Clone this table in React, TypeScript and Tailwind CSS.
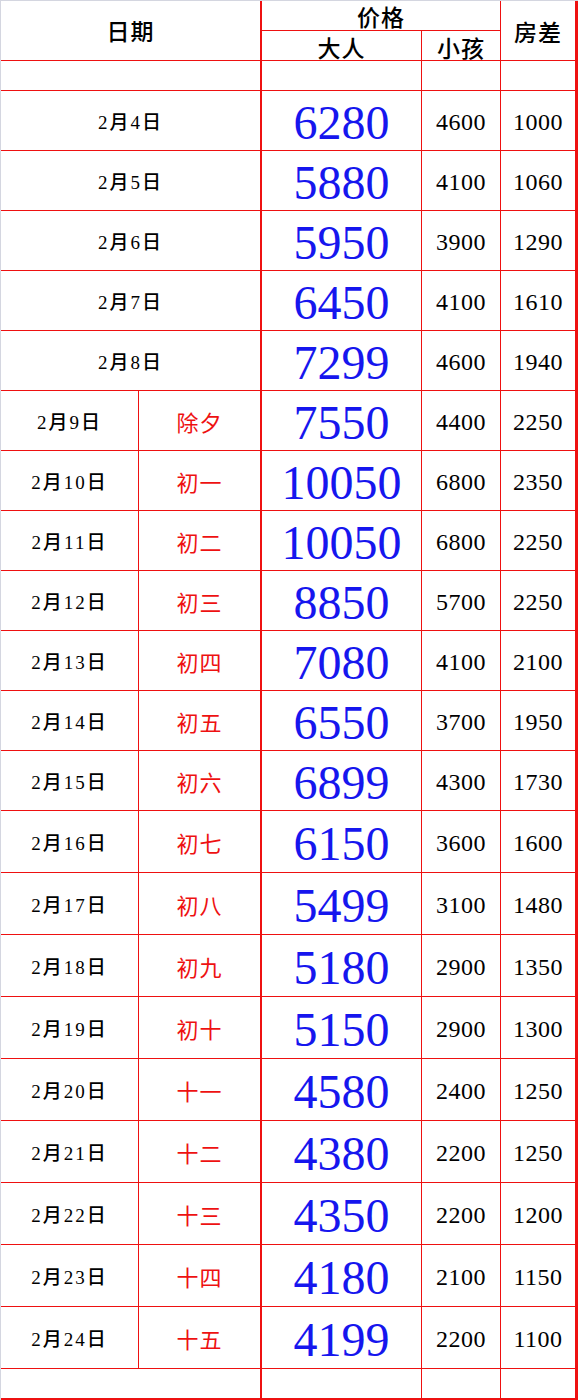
import React from "react";

type Row = { d: string; l?: string; a: string; c: string; f: string };

const rows: Row[] = [
  { d: "2月4日", a: "6280", c: "4600", f: "1000" },
  { d: "2月5日", a: "5880", c: "4100", f: "1060" },
  { d: "2月6日", a: "5950", c: "3900", f: "1290" },
  { d: "2月7日", a: "6450", c: "4100", f: "1610" },
  { d: "2月8日", a: "7299", c: "4600", f: "1940" },
  { d: "2月9日", l: "除夕", a: "7550", c: "4400", f: "2250" },
  { d: "2月10日", l: "初一", a: "10050", c: "6800", f: "2350" },
  { d: "2月11日", l: "初二", a: "10050", c: "6800", f: "2250" },
  { d: "2月12日", l: "初三", a: "8850", c: "5700", f: "2250" },
  { d: "2月13日", l: "初四", a: "7080", c: "4100", f: "2100" },
  { d: "2月14日", l: "初五", a: "6550", c: "3700", f: "1950" },
  { d: "2月15日", l: "初六", a: "6899", c: "4300", f: "1730" },
  { d: "2月16日", l: "初七", a: "6150", c: "3600", f: "1600" },
  { d: "2月17日", l: "初八", a: "5499", c: "3100", f: "1480" },
  { d: "2月18日", l: "初九", a: "5180", c: "2900", f: "1350" },
  { d: "2月19日", l: "初十", a: "5150", c: "2900", f: "1300" },
  { d: "2月20日", l: "十一", a: "4580", c: "2400", f: "1250" },
  { d: "2月21日", l: "十二", a: "4380", c: "2200", f: "1250" },
  { d: "2月22日", l: "十三", a: "4350", c: "2200", f: "1200" },
  { d: "2月23日", l: "十四", a: "4180", c: "2100", f: "1150" },
  { d: "2月24日", l: "十五", a: "4199", c: "2200", f: "1100" },
];

const cell = "flex items-center justify-center border-[#ee1111] border-b";
const hdr =
  "text-[23px] tracking-[1px] text-black font-medium font-['Noto_Sans_CJK_SC',sans-serif] leading-none";
const dateF =
  "text-[19px] tracking-[2px] text-black font-medium font-['Liberation_Serif','Noto_Sans_CJK_SC',serif] leading-none pt-[3px]";
const lblF =
  "text-[22px] tracking-[1px] text-[#ee1111] font-['Noto_Sans_CJK_SC',sans-serif] leading-none pt-[1px]";
const bigF =
  "text-[48px] text-[#1616ee] font-['Liberation_Serif',serif] leading-none pt-[4px]";
const smF =
  "text-[24px] tracking-[0.5px] text-black font-['Liberation_Serif',serif] leading-none pt-[3px]";

export default function App() {
  return (
    <div className="w-[580px] h-[1400px] bg-white">
      <div className="w-[578px] border-l border-t border-[#d4d6e0] grid grid-cols-[138px_123px_160px_79px_77px] grid-rows-[30px_30px_30px_repeat(12,60px)_repeat(9,62px)_31px]">
        {/* header */}
        <div className={`${cell} col-span-2 row-span-2 border-r-2 ${hdr}`}>日期</div>
        <div className={`${cell} col-span-2 border-r ${hdr} pt-[2px]`}>价格</div>
        <div className={`${cell} row-span-2 border-r-[3px] ${hdr} pt-[2px]`}>房差</div>
        <div className={`${cell} border-r ${hdr} pt-[3px]`}>大人</div>
        <div className={`${cell} border-r ${hdr} pt-[3px]`}>小孩</div>
        {/* empty row */}
        <div className={`${cell} col-span-2 border-r-2`} />
        <div className={`${cell} border-r`} />
        <div className={`${cell} border-r`} />
        <div className={`${cell} border-r-[3px]`} />
        {rows.map((r) => (
          <React.Fragment key={r.d}>
            {r.l ? (
              <>
                <div className={`${cell} border-r ${dateF}`}>{r.d}</div>
                <div className={`${cell} border-r-2 ${lblF}`}>{r.l}</div>
              </>
            ) : (
              <div className={`${cell} col-span-2 border-r-2 ${dateF}`}>{r.d}</div>
            )}
            <div className={`${cell} border-r ${bigF}`}>{r.a}</div>
            <div className={`${cell} border-r ${smF}`}>{r.c}</div>
            <div className={`${cell} border-r-[3px] ${smF}`}>{r.f}</div>
          </React.Fragment>
        ))}
        {/* bottom empty row */}
        <div className={`${cell} col-span-2 border-r-2 border-b-2`} />
        <div className={`${cell} border-r border-b-2`} />
        <div className={`${cell} border-r border-b-2`} />
        <div className={`${cell} border-r-[3px] border-b-2`} />
      </div>
    </div>
  );
}
